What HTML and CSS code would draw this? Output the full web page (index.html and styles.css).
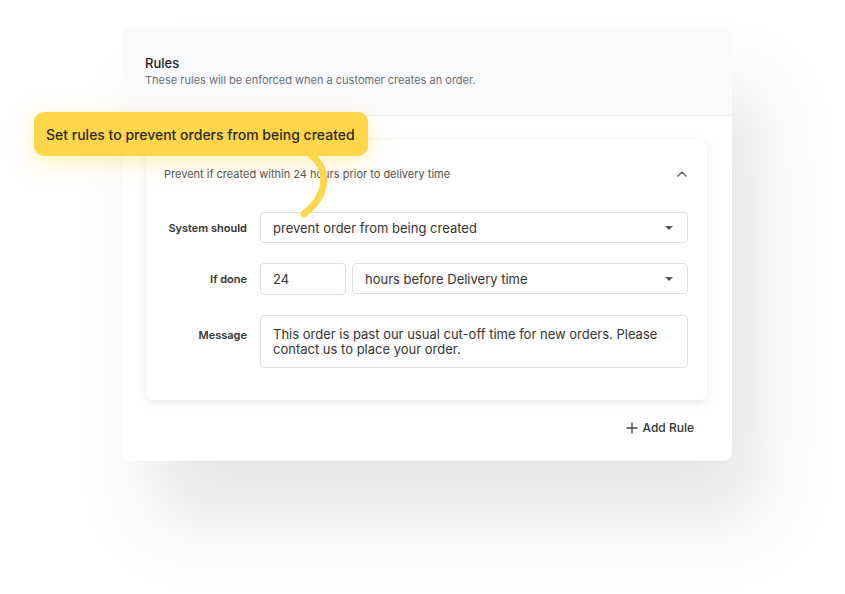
FILE: index.html
```html
<!DOCTYPE html>
<html lang="en">
<head>
  <meta charset="UTF-8">
  <meta name="viewport" content="width=device-width, initial-scale=1">
  <title>Rules</title>
  <link rel="stylesheet" href="styles.css">
</head>
<body>
  <div class="stage">
    <!-- Tarjeta principal de reglas -->
    <div class="rules-card">
      <div class="rules-header">
        <h2>Rules</h2>
        <p>These rules will be enforced when a customer creates an order.</p>
      </div>
      <div class="rules-body">
        <div class="rule">
          <div class="rule-head">
            <span>Prevent if created within 24 hours prior to delivery time</span>
            <svg class="chevron" width="10" height="6" viewBox="0 0 10 6"><path d="M1 5 L5 1 L9 5" fill="none" stroke="#666" stroke-width="1.5" stroke-linecap="round" stroke-linejoin="round"/></svg>
          </div>
          <div class="rule-form">
            <label>System should</label>
            <div class="field select">prevent order from being created<span class="caret"></span></div>

            <label>If done</label>
            <div class="field-pair">
              <div class="field num">24</div>
              <div class="field select grow">hours before Delivery time<span class="caret"></span></div>
            </div>

            <label class="top">Message</label>
            <div class="field area">This order is past our usual cut-off time for new orders. Please contact us to place your order.</div>
          </div>
        </div>
        <div class="add-rule">
          <svg width="12" height="12" viewBox="0 0 12 12"><path d="M6 0.5 V11.5 M0.5 6 H11.5" stroke="#444" stroke-width="1.3"/></svg>
          Add Rule
        </div>
      </div>
    </div>

    <!-- Globo amarillo -->
    <div class="callout">Set rules to prevent orders from being created</div>
    <svg class="callout-tail" width="40" height="70" viewBox="0 0 40 70">
      <path d="M12 4 C 26 14, 32 40, 4 62" fill="none" stroke="#ffd54a" stroke-width="7" stroke-linecap="round"/>
    </svg>
  </div>
</body>
</html>
```

FILE: styles.css
```css
* {
  box-sizing: border-box;
}
body {
  margin: 0;
  background: #fff;
  font-family: Inter, "Noto Sans", sans-serif;
  color: #333;
}
.stage {
  position: relative;
  width: 845px;
  height: 594px;
  padding: 28px 0 0 122px;
  overflow: hidden;
}
.rules-card {
  width: 610px;
  background: #fff;
  border-radius: 8px;
  box-shadow: 30px 60px 80px rgba(0,0,0,0.1), 0 0 2px rgba(0,0,0,0.04);
  overflow: hidden;
}
.rules-header {
  background: #f9fafc;
  border-bottom: 1px solid #eceef1;
  padding: 26px 23px 27px;
}
.rules-header h2 {
  margin: 0;
  font-size: 13px;
  font-weight: 500;
  line-height: 18px;
  color: #222;
}
.rules-header p {
  margin: 0;
  font-size: 11px;
  line-height: 16px;
  color: #6b6e74;
}
.rules-body {
  padding: 24px 25px 26px 24px;
}
.rule {
  background: #fff;
  border-radius: 6px;
  box-shadow: 0 3px 10px rgba(0,0,0,0.09), 0 0 1px rgba(0,0,0,0.08);
  padding: 26px 19px 32px 18px;
}
.rule-head {
  display: flex;
  justify-content: space-between;
  align-items: center;
  font-size: 11px;
  line-height: 16px;
  color: #4a4d52;
  padding-right: 1px;
}
.rule-form {
  display: grid;
  grid-template-columns: 83px 1fr;
  column-gap: 13px;
  row-gap: 20px;
  margin-top: 30px;
  align-items: center;
}
.rule-form label {
  text-align: right;
  font-size: 11px;
  font-weight: 600;
  color: #333;
}
.rule-form label.top {
  align-self: start;
  padding-top: 13px;
}
.field {
  border: 1px solid #dcdfe4;
  border-radius: 4px;
  height: 31px;
  padding: 0 12px;
  display: flex;
  align-items: center;
  font-size: 13px;
  color: #333;
  background: #fff;
}
.select {
  justify-content: space-between;
}
.caret {
  width: 0;
  height: 0;
  border-left: 4px solid transparent;
  border-right: 4px solid transparent;
  border-top: 4px solid #555;
  margin-right: 2px;
}
.field-pair {
  display: flex;
  align-items: flex-start;
  gap: 6px;
}
.num {
  width: 86px;
  height: 32px;
}
.grow {
  flex: 1;
}
.area {
  height: 53px;
  align-items: flex-start;
  padding-top: 11px;
  line-height: 15px;
}
.add-rule {
  display: flex;
  justify-content: flex-end;
  align-items: center;
  gap: 4px;
  margin-top: 20px;
  padding-right: 13px;
  font-size: 12px;
  font-weight: 500;
  color: #333;
}
.callout {
  position: absolute;
  left: 34px;
  top: 112px;
  width: 334px;
  height: 44px;
  background: #ffd54a;
  border-radius: 10px;
  display: flex;
  align-items: center;
  padding-left: 12px;
  font-size: 14px;
  font-weight: 500;
  color: #2b2b2b;
  box-shadow: 0 6px 26px rgba(255,206,60,0.35);
}
.callout-tail {
  position: absolute;
  left: 300px;
  top: 152px;
}
```
